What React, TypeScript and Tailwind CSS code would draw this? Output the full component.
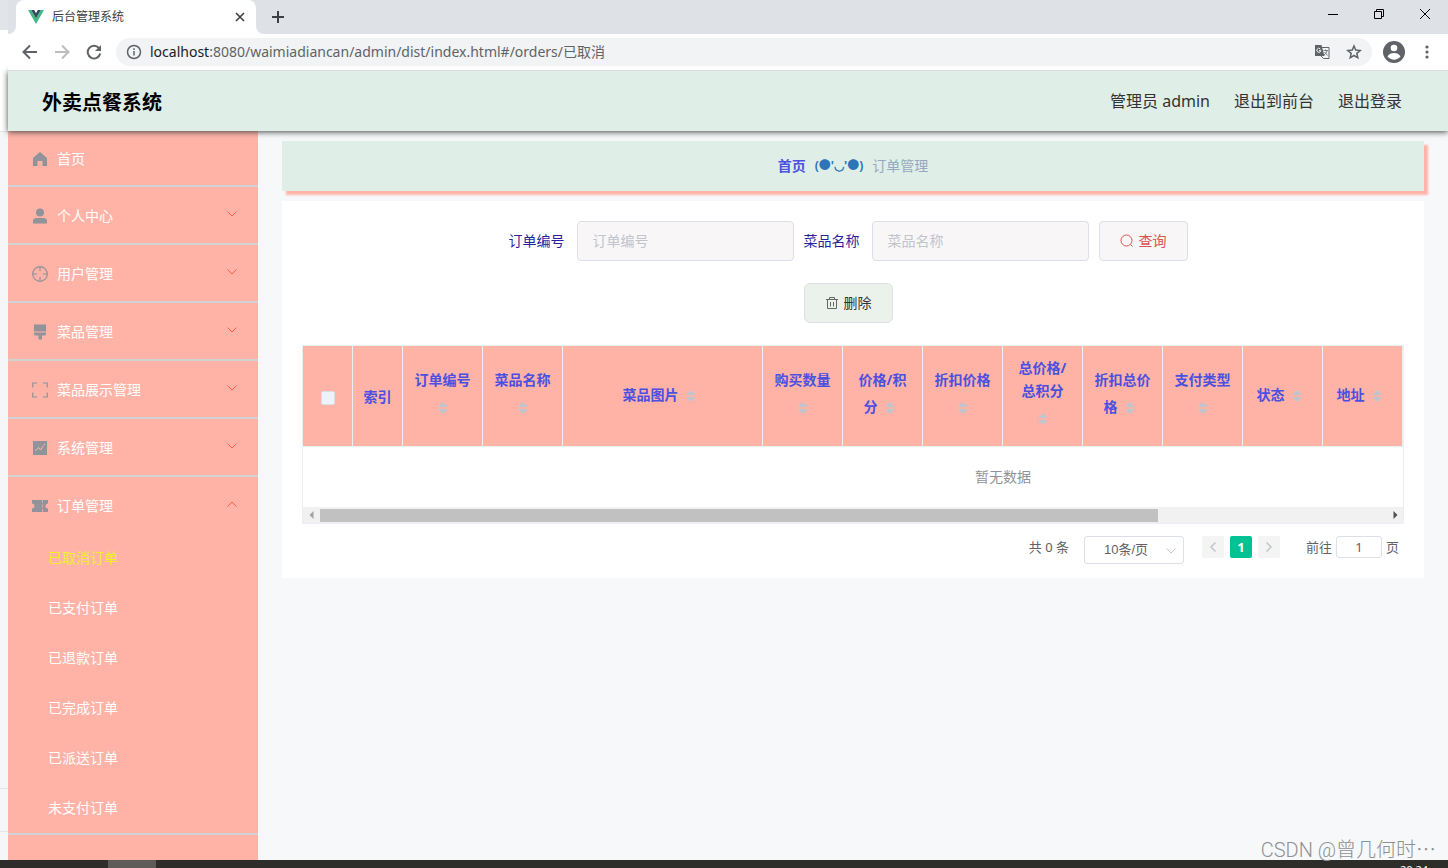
import { useState } from "react";
import type { ReactNode } from "react";

const menuItems = [
	{ title: "个人中心", icon: "user" },
	{ title: "用户管理", icon: "aim" },
	{ title: "菜品管理", icon: "brush" },
	{ title: "菜品展示管理", icon: "full" },
	{ title: "系统管理", icon: "chart" },
];

const orderItems = [
	"已取消订单",
	"已支付订单",
	"已退款订单",
	"已完成订单",
	"已派送订单",
	"未支付订单",
];

const columns = [
	{ title: "订单编号", wide: false },
	{ title: "菜品名称", wide: false },
	{ title: "菜品图片", wide: true },
	{ title: "购买数量", wide: false },
	{ title: "价格/积分", wide: false },
	{ title: "折扣价格", wide: false },
	{ title: "总价格/总积分", wide: false },
	{ title: "折扣总价格", wide: false },
	{ title: "支付类型", wide: false },
	{ title: "状态", wide: false },
	{ title: "地址", wide: false },
];

const menuIcons: Record<string, ReactNode> = {
	home: <path d="M8 1 1 7v8h4.500V10h5v5H15V7z" fill="currentColor" />,
	user: (
		<g fill="currentColor">
			<circle cx="8" cy="4.500" r="4" />
			<path d="M1 15.500v-2.500c0-2 1.500-3 3.500-3h7c2 0 3.500 1 3.500 3v2.500z" />
		</g>
	),
	aim: (
		<g fill="none" stroke="currentColor" strokeWidth="1.200">
			<circle cx="8" cy="8" r="7.300" />
			<path d="M8 .6v4.600M8 10.800v4.600M.6 8h4.600M10.800 8h4.600" />
		</g>
	),
	brush: (
		<path
			d="M2 .5h12v7H2zM2 8.500h12v1.500c0 .8-.7 1.500-1.500 1.500H10v4H6.500v-4h-3C2.700 11.500 2 10.800 2 10z"
			fill="currentColor"
		/>
	),
	full: (
		<path
			d="M.7 5.500v-4.500h4.500M10.800 1h4.500v4.500M15.300 10.500V15h-4.500M5.200 15H.7v-4.500"
			fill="none"
			stroke="currentColor"
			strokeWidth="1.200"
		/>
	),
	chart: (
		<g>
			<path d="M1 1h14v14H1z" fill="currentColor" />
			<path
				d="m3.500 11 3-3.500 2 2.500 3-4.500m.2-.8 1.500-.4"
				fill="none"
				stroke="#ffb3a7"
			/>
		</g>
	),
	ticket: (
		<g>
			<path
				d="M0 2h16v3.500a2.500 2.500 0 0 0 0 5V14H0v-3.500a2.500 2.500 0 0 0 0-5z"
				fill="currentColor"
			/>
			<path d="M10.500 2v12" stroke="#ffb3a7" strokeDasharray="3 1.500" strokeWidth=".7" />
		</g>
	),
};

const MenuIcon = ({ name }: { name: string }) => (
	<svg viewBox="0 0 16 16" className="size-4 text-[#909399]">
		{menuIcons[name]}
	</svg>
);

const Chevron = ({ className }: { className: string }) => (
	<svg viewBox="0 0 10 6" className={className} fill="none" stroke="currentColor">
		<path d="m.5 .5 4.500 4.500L9.500 .5" />
	</svg>
);

const SortCaret = () => (
	<span className="inline-flex h-[34px] w-6 items-center justify-center align-middle">
		<svg viewBox="0 0 10 12" className="h-3 w-2.5" fill="#c0c4cc">
			<path d="M0 5 5 0l5 5zM0 7l5 5 5-5z" />
		</svg>
	</span>
);

const BrowserBar = () => (
	<div className="relative z-20 border-b border-[#dadce0] bg-white text-[#5f6368]">
		<div className="flex h-[34px] items-start justify-between bg-[#dee1e6]">
			<div className="flex h-full items-center">
				<div className="flex h-full w-2 bg-white">
					<span className="flex-1 rounded-br-lg bg-[#dee1e6]" />
				</div>
				<div className="flex h-full w-60 items-center rounded-t-lg bg-white pr-[7px] pl-3">
					<svg viewBox="0 0 16 14" className="h-3.5 w-4">
						<path d="M0 0h3.200L8 8.300 12.800 0H16L8 14z" fill="#41b883" />
						<path d="M3.200 0h3L8 3.200 9.800 0h3L8 8.300z" fill="#34495e" />
					</svg>
					<span className="flex-1 pl-2 text-xs text-[#3c4043]">后台管理系统</span>
					<button type="button" aria-label="关闭标签页" className="p-1">
						<svg viewBox="0 0 10 10" className="size-2.5" stroke="#3c4043" strokeWidth="1.600">
							<path d="m1 1 8 8M9 1 1 9" />
						</svg>
					</button>
				</div>
				<div className="flex h-full w-2 bg-white">
					<span className="flex-1 rounded-bl-lg bg-[#dee1e6]" />
				</div>
				<button type="button" aria-label="新标签页" className="p-2">
					<svg viewBox="0 0 12 12" className="size-3" stroke="#3c4043" strokeWidth="2">
						<path d="M6 0v12M0 6h12" />
					</svg>
				</button>
			</div>
			<div className="flex items-center gap-9 pt-2 pr-[18px] text-black">
				<button type="button" aria-label="最小化">
					<svg viewBox="0 0 10 12" className="h-3 w-2.5" stroke="currentColor">
						<path d="M0 6.500h10" />
					</svg>
				</button>
				<button type="button" aria-label="还原">
					<svg viewBox="0 0 10 10" className="size-2.5" fill="none" stroke="currentColor">
						<path d="M.5 2.500h7v7h-7zM2.500 2.500v-2h7v7h-2" />
					</svg>
				</button>
				<button type="button" aria-label="关闭">
					<svg viewBox="0 0 10 10" className="size-2.5" stroke="currentColor">
						<path d="m0 0 10 10M10 0 0 10" />
					</svg>
				</button>
			</div>
		</div>
		<div className="flex h-9 items-center pr-[19px] pl-[14px]">
			<div className="flex w-[94px] items-center gap-4">
				<button type="button" aria-label="后退">
					<svg viewBox="0 0 16 16" className="size-4" fill="none" stroke="currentColor" strokeWidth="2">
						<path d="M15 8H2M8 1.500 1.500 8 8 14.500" />
					</svg>
				</button>
				<button type="button" aria-label="前进" className="text-[#babcbe]">
					<svg viewBox="0 0 16 16" className="size-4" fill="none" stroke="currentColor" strokeWidth="2">
						<path d="M1 8h13M8 1.500 14.500 8 8 14.500" />
					</svg>
				</button>
				<button type="button" aria-label="刷新">
					<svg viewBox="0 0 16 16" className="size-4" fill="none" stroke="currentColor" strokeWidth="2">
						<path d="M13 4.200A6.300 6.300 0 1 0 14.200 9.500" />
						<path d="M15 1v6H9z" fill="currentColor" stroke="none" />
					</svg>
				</button>
			</div>
			<div className="flex h-7 flex-1 items-center rounded-full bg-[#f1f3f4] px-2.5">
				<svg viewBox="0 0 16 16" className="size-4" fill="none" stroke="currentColor" strokeWidth="1.500">
					<circle cx="8" cy="8" r="6.500" />
					<path d="M8 7v4.500M8 4.200v1.700" />
				</svg>
				<p className="flex-1 pl-2 text-sm">
					<span className="text-[#202124]">localhost</span>
					:8080/waimiadiancan/admin/dist/index.html#/orders/已取消
				</p>
				<div className="flex items-center gap-4">
					<button type="button" aria-label="翻译此页">
						<svg viewBox="0 0 16 16" className="size-4">
							<path d="M7.500 3.500h7.500v11H9.500L7 12" fill="none" stroke="currentColor" />
							<path d="M1 1h6.500l3 11H1z" fill="currentColor" />
							<path d="M6.800 6.500H5M6.300 5A2 2 0 1 0 6.800 6.500" fill="none" stroke="#f1f3f4" />
							<path d="M9.500 6.500H14M11.500 5.500v1M13 6.500c-.4 2-1.500 3.500-3 4.500M10.500 8l3 3.500" fill="none" stroke="currentColor" strokeWidth=".8" />
						</svg>
					</button>
					<button type="button" aria-label="收藏">
						<svg viewBox="0 0 16 16" className="size-4" fill="none" stroke="currentColor" strokeWidth="1.500">
							<path d="m8 2 1.700 4.100 4.500.4-3.400 2.900 1 4.400L8 11.500l-3.800 2.300 1-4.400-3.400-2.900 4.500-.4z" />
						</svg>
					</button>
				</div>
			</div>
			<button type="button" aria-label="用户" className="pr-5 pl-[11px]">
				<svg viewBox="0 0 22 22" className="size-[22px]">
					<circle cx="11" cy="11" r="11" fill="currentColor" />
					<circle cx="11" cy="7" r="3.300" fill="#fff" />
					<path d="M4.500 15.500c1-2.500 4-3.500 6.500-3.500s5.500 1 6.500 3.500c-1.500 2-4 3.200-6.500 3.200s-5-1.200-6.500-3.200z" fill="#fff" />
				</svg>
			</button>
			<button type="button" aria-label="菜单">
				<svg viewBox="0 0 4 14" className="h-3.5 w-1" fill="currentColor">
					<circle cx="2" cy="2" r="1.600" />
					<circle cx="2" cy="7" r="1.600" />
					<circle cx="2" cy="12" r="1.600" />
				</svg>
			</button>
		</div>
	</div>
);

const Header = () => (
	<header className="relative z-10 flex h-[60px] items-center justify-between bg-[#e0eee8] pr-[46px] pl-[34px] shadow-[0_1px_6px_#444]">
		<h1 className="pt-1 text-xl font-bold text-black">外卖点餐系统</h1>
		<nav className="flex gap-6 text-base text-[#333]">
			<span>管理员 admin</span>
			<a href="#front">退出到前台</a>
			<a href="#logout">退出登录</a>
		</nav>
	</header>
);

const Sidebar = () => {
	const [active, setActive] = useState("已取消订单");

	return (
		<aside className="w-[250px] shrink-0 bg-[#ffb3a7] text-sm text-white">
			<a
				href="#home"
				className="flex h-14 items-center gap-[9px] border-b-2 border-[#d3d3d3] px-6 pt-0.5"
			>
				<MenuIcon name="home" />
				首页
			</a>
			{menuItems.map((item) => (
				<button
					type="button"
					key={item.title}
					className="flex h-[58px] w-full items-center gap-[9px] border-b-2 border-[#d3d3d3] pt-0.5 pr-[21px] pl-6"
				>
					<MenuIcon name={item.icon} />
					<span className="flex-1 text-left">{item.title}</span>
					<Chevron className="mb-1 h-1.5 w-2.5 text-[#ff5a4d]" />
				</button>
			))}
			<div className="border-b-2 border-[#d3d3d3]">
				<button
					type="button"
					className="flex h-14 w-full items-center gap-[9px] pt-0.5 pr-[21px] pl-6"
				>
					<MenuIcon name="ticket" />
					<span className="flex-1 text-left">订单管理</span>
					<Chevron className="mb-1 h-1.5 w-2.5 rotate-180 text-[#ff5a4d]" />
				</button>
				{orderItems.map((item) => (
					<a
						href="#orders"
						key={item}
						onClick={() => setActive(item)}
						className={
							item === active
								? "flex h-[50px] items-center pl-10 text-[#f0f02b]"
								: "flex h-[50px] items-center pl-10"
						}
					>
						{item}
					</a>
				))}
			</div>
		</aside>
	);
};

const SearchForm = () => (
	<form className="flex flex-wrap items-center justify-center gap-2.5 pr-2.5 text-sm">
		{["订单编号", "菜品名称"].map((name) => (
			<label key={name} className="flex items-center gap-3 text-[#2b1f9e]">
				{name}
				<input
					type="text"
					placeholder={name}
					className="h-10 w-[217px] rounded border border-[#dcdfe6] bg-[#f8f6f7] px-[15px] pb-0.5 placeholder:text-[#c0c4cc]"
				/>
			</label>
		))}
		<button
			type="button"
			className="flex h-10 items-center gap-[5px] rounded border border-[#dcdfe6] bg-[#f8f6f7] px-5 text-[#d9534f]"
		>
			<svg viewBox="0 0 14 14" className="size-3.5" fill="none" stroke="currentColor">
				<circle cx="6.500" cy="6.500" r="5.500" />
				<path d="m10.500 10.500 2 2" />
			</svg>
			查询
		</button>
	</form>
);

const OrderTable = () => (
	<div className="border border-[#ebeef5]">
		<div className="overflow-hidden">
			<table className="w-[1400px] table-fixed border-separate border-spacing-0 text-sm">
				<thead className="bg-[#ffb3a7] leading-[23px] text-[#4b50e0]">
					<tr className="h-[101px]">
						<th className="w-[50px] border-r border-b border-[#ebeef5] p-0">
							<input
								type="checkbox"
								aria-label="全选"
								className="size-3.5 appearance-none rounded-xs border border-[#dcdfe6] bg-[#edf2fc] align-middle"
							/>
						</th>
						<th className="w-[50px] border-r border-b border-[#ebeef5] p-0">索引</th>
						{columns.map((column) => (
							<th
								key={column.title}
								className={
									column.wide
										? "w-[200px] border-r border-b border-[#ebeef5] px-2.5 py-0"
										: "w-20 border-r border-b border-[#ebeef5] px-2.5 py-0"
								}
							>
								{column.title}
								<SortCaret />
							</th>
						))}
						<th className="border-b border-[#ebeef5]" />
					</tr>
				</thead>
				<tbody>
					<tr className="h-[60px]">
						<td colSpan={14} className="text-center text-[#909399]">
							暂无数据
						</td>
					</tr>
				</tbody>
			</table>
		</div>
		<div className="flex h-4 items-center justify-between bg-[#f1f1f1]">
			<svg viewBox="0 0 17 16" className="h-4 w-[17px]" fill="#a3a3a3">
				<path d="M10.500 4v8l-4-4z" />
			</svg>
			<div className="flex-1">
				<div className="h-[13px] w-[78.6%] bg-[#c1c1c1]" />
			</div>
			<svg viewBox="0 0 17 16" className="h-4 w-[17px]" fill="#505050">
				<path d="M7.500 4v8l4-4z" />
			</svg>
		</div>
	</div>
);

const Pagination = () => (
	<div className="flex items-start justify-end pt-3 pr-[5px] text-[13px] leading-[22px] text-[#606266]">
		<span className="pr-[15px]">共 0 条</span>
		<div className="relative w-[100px]">
			<select
				aria-label="每页条数"
				className="h-7 w-full appearance-none rounded-[3px] border border-[#dcdfe6] bg-white pl-[19px] font-['Liberation_Sans','Noto_Sans_CJK_SC',sans-serif]"
			>
				<option>10条/页</option>
			</select>
			<Chevron className="pointer-events-none absolute top-3 right-2 h-1.5 w-2.5 text-[#c0c4cc]" />
		</div>
		<div className="flex gap-1.5 px-[18px]">
			<button
				type="button"
				aria-label="上一页"
				className="flex size-[22px] items-center justify-center rounded-xs bg-[#f4f4f5] text-[#c0c4cc]"
			>
				<svg viewBox="0 0 6 10" className="h-2.5 w-1.5" fill="none" stroke="currentColor" strokeWidth="1.500">
					<path d="M5.500 .5 1 5l4.500 4.500" />
				</svg>
			</button>
			<button
				type="button"
				className="size-[22px] rounded-xs bg-[#00c292] font-bold text-white"
			>
				1
			</button>
			<button
				type="button"
				aria-label="下一页"
				className="flex size-[22px] items-center justify-center rounded-xs bg-[#f4f4f5] text-[#c0c4cc]"
			>
				<svg viewBox="0 0 6 10" className="h-2.5 w-1.5" fill="none" stroke="currentColor" strokeWidth="1.500">
					<path d="M.5 .5 5 5 .5 9.500" />
				</svg>
			</button>
		</div>
		<label className="flex gap-1 pl-2">
			前往
			<input
				type="text"
				defaultValue="1"
				className="h-[22px] w-[46px] rounded-[3px] border border-[#dcdfe6] text-center"
			/>
			页
		</label>
	</div>
);

const Content = () => (
	<main className="flex min-w-0 flex-1 flex-col gap-2.5 px-6 pt-2.5">
		<nav className="flex h-[50px] items-center justify-center gap-[9px] bg-[#e0eee8] text-sm shadow-[4px_4px_2px_#ffb3a7]">
			<a href="#home" className="font-bold text-[#4b50e0]">
				首页
			</a>
			<span className="text-xs font-bold text-[#2d75b6]">(●'◡'●)</span>
			<span className="text-[#97a8be]">订单管理</span>
		</nav>
		<section className="bg-white px-5 pt-5 pb-3.5">
			<SearchForm />
			<div className="flex justify-center py-[22px] pr-2.5">
				<button
					type="button"
					className="flex h-10 items-center gap-[5px] rounded-md border border-[#dcdfe6] bg-[#ebf2eb] px-5 text-sm text-[#333]"
				>
					<svg viewBox="0 0 14 14" className="size-3.5" fill="none" stroke="#666">
						<path d="M1 3.500h12M4.500 3.500v-2h5v2M2.500 3.500v9h9v-9M5.500 6v4.500M8.500 6v4.500" />
					</svg>
					删除
				</button>
			</div>
			<OrderTable />
			<Pagination />
		</section>
	</main>
);

// Edge of the window lying behind this one
const WindowEdge = () => (
	<div className="flex w-2 shrink-0 flex-col bg-[#f5f6f8]">
		<div className="h-[30px] bg-[#e3e4e7]" />
		<div className="h-[102px] border-b border-[#e4e5e8] bg-white" />
		<div className="flex-1" />
		<div className="h-11 border-y border-[#e4e5eb]" />
		<div className="h-7" />
	</div>
);

const App = () => (
	<div className="relative flex min-h-screen flex-col bg-[#f7f8fa] font-['Noto_Sans','Noto_Sans_CJK_SC',sans-serif]">
		<div className="flex flex-1">
			<WindowEdge />
			<div className="flex min-w-0 flex-1 flex-col">
				<BrowserBar />
				<Header />
				<div className="flex flex-1">
					<Sidebar />
					<Content />
				</div>
			</div>
		</div>
		<footer className="flex h-2 justify-between overflow-hidden bg-[#2f2d2a] pr-5 pl-[108px]">
			<div className="w-12 bg-[#5e5c59]" />
			<span className="pt-1 text-[11px] leading-none text-white">20:24</span>
		</footer>
		<p className="absolute right-3 bottom-1.5 font-['Roboto','Noto_Sans_CJK_SC',sans-serif] text-xl leading-6 font-light text-[#8e9093]">
			CSDN @曾几何时⋯
		</p>
	</div>
);

export default App;
